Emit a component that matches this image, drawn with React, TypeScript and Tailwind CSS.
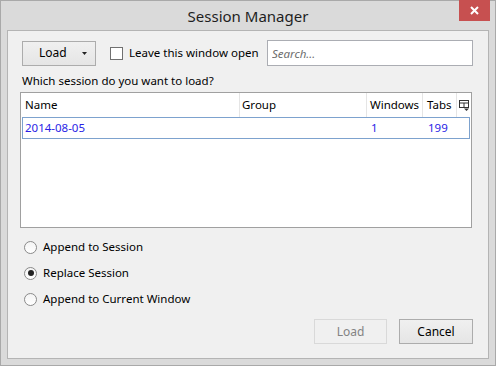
import React, { useState } from 'react';

const font = { fontFamily: '"Noto Sans", "Open Sans", sans-serif' };

function Radio({ label, checked, onSelect }: { label: string; checked: boolean; onSelect: () => void }) {
  return (
    <label className="flex items-center h-[26px] cursor-default" onClick={onSelect}>
      <span className="w-[13px] h-[13px] rounded-full border border-[#8a8a8a] bg-gradient-to-b from-[#f4f4f4] to-white flex items-center justify-center">
        {checked && <span className="w-[6px] h-[6px] rounded-full bg-[#222]" />}
      </span>
      <span className="ml-[6px] text-[11.5px] text-black">{label}</span>
    </label>
  );
}

function ColumnsIcon() {
  return (
    <svg width="11" height="11" viewBox="0 0 11 11" className="block">
      <rect x="0.5" y="0.5" width="9" height="7" fill="none" stroke="#333" />
      <line x1="0.5" y1="3" x2="9.5" y2="3" stroke="#333" />
      <line x1="5" y1="3" x2="5" y2="7.5" stroke="#333" />
      <path d="M5 8.5 H10 L7.5 11 Z" fill="#333" />
    </svg>
  );
}

export default function App() {
  const [mode, setMode] = useState('replace');
  const [keepOpen, setKeepOpen] = useState(false);
  const [search, setSearch] = useState('');

  return (
    <div style={font} className="w-[496px] h-[366px] bg-[#dadada] border border-[#a9a9a9] flex flex-col select-none">
      <div className="relative h-[29px] flex items-center justify-center shrink-0">
        <span className="text-[15px] text-[#1e1e1e] mt-[2px]">Session Manager</span>
        <button className="absolute top-[-1px] right-[5px] w-[31px] h-[21px] bg-[#c75050] flex items-center justify-center">
          <svg width="9" height="9" viewBox="0 0 9 9">
            <path d="M1 1 L8 8 M8 1 L1 8" stroke="white" strokeWidth="2" />
          </svg>
        </button>
      </div>

      <div className="mx-[6px] mb-[6px] flex-1 bg-[#f0f0f0] border border-[#b4b4b4] pl-[12px] pr-[16px] pt-[9px] flex flex-col">
        <div className="flex items-center h-[26px] pl-[2px]">
          <button className="w-[74px] h-[25px] border border-[#acacac] bg-gradient-to-b from-[#f0f0f0] to-[#e5e5e5] flex items-center text-[12px] text-black">
            <span className="ml-[16px]">Load</span>
            <svg width="5" height="3" viewBox="0 0 5 3" className="ml-[15px]">
              <path d="M0 0 H5 L2.5 3 Z" fill="#222" />
            </svg>
          </button>
          <label className="flex items-center ml-[14px]" onClick={() => setKeepOpen(!keepOpen)}>
            <span className="w-[13px] h-[13px] border border-[#707070] bg-white flex items-center justify-center">
              {keepOpen && <span className="w-[7px] h-[7px] bg-[#222]" />}
            </span>
            <span className="ml-[6px] text-[11.5px] text-black">Leave this window open</span>
          </label>
          <input
            value={search}
            onChange={e => setSearch(e.target.value)}
            placeholder="Search..."
            style={font}
            className="ml-auto mr-[-1px] w-[206px] h-[26px] border border-[#abadb3] bg-white px-[4px] text-[11.5px] italic outline-none placeholder:text-[#6d6d6d]"
          />
        </div>

        <div className="mt-[7px] h-[16px] pl-[2px] text-[11.5px] text-black leading-[16px]">Which session do you want to load?</div>

        <div className="mt-[3px] h-[136px] border border-[#a0a0a0] bg-white flex flex-col">
          <div className="flex h-[24px] text-[11.5px] text-black">
            <div className="w-[219px] pl-[4px] flex items-center border-r border-[#e5e5e5]">Name</div>
            <div className="w-[127px] pl-[2px] flex items-center border-r border-[#e5e5e5]">Group</div>
            <div className="w-[56px] pl-[3px] flex items-center border-r border-[#e5e5e5]">Windows</div>
            <div className="w-[34px] pl-[4px] flex items-center border-r border-[#e5e5e5]">Tabs</div>
            <div className="flex-1 flex items-center justify-center"><ColumnsIcon /></div>
          </div>
          <div className="mx-[1px] h-[22px] border border-[#7da2ce] flex items-center text-[11.5px] text-[#2a1ee6]">
            <div className="w-[218px] pl-[2px]">2014-08-05</div>
            <div className="w-[127px]" />
            <div className="w-[56px] pl-[3px]">1</div>
            <div className="w-[34px] pl-[4px]">199</div>
          </div>
        </div>

        <div className="mt-[6px] pl-[4px] flex flex-col">
          <Radio label="Append to Session" checked={mode === 'append'} onSelect={() => setMode('append')} />
          <Radio label="Replace Session" checked={mode === 'replace'} onSelect={() => setMode('replace')} />
          <Radio label="Append to Current Window" checked={mode === 'window'} onSelect={() => setMode('window')} />
        </div>

        <div className="flex justify-end mt-[7px] mr-[-1px]">
          <button disabled className="w-[73px] h-[25px] border border-[#d9d9d9] bg-[#f0f0f0] text-[12px] text-[#838383]">Load</button>
          <button className="ml-[12px] w-[74px] h-[25px] border border-[#acacac] bg-gradient-to-b from-[#f0f0f0] to-[#e5e5e5] text-[12px] text-black">Cancel</button>
        </div>
      </div>
    </div>
  );
}
